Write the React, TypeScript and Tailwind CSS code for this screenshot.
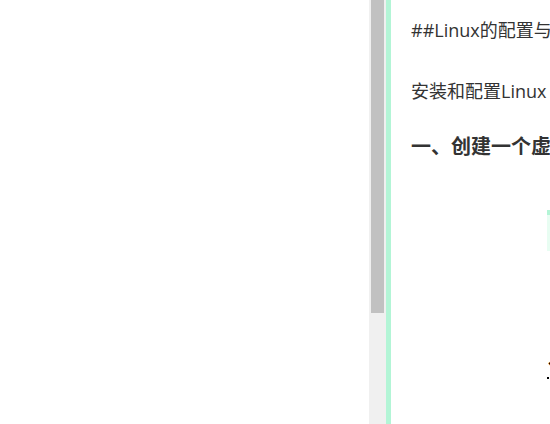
import React from "react";

const font = { fontFamily: '"Open Sans", "Noto Sans CJK SC", sans-serif' };

function Scrollbar() {
  return (
    <div className="w-[17px] h-full bg-[#f0f0f0] pl-[2px] shrink-0">
      <div className="w-[13px] h-[313px] bg-[#c1c1c1]" />
    </div>
  );
}

function Article() {
  return (
    <div
      className="flex-1 h-full overflow-hidden bg-white pl-[20px] text-[#333333] whitespace-nowrap"
      style={font}
    >
      <p className="mt-[18px] text-[18px] leading-[24px]">##Linux的配置与</p>
      <p className="mt-[37px] text-[18px] leading-[24px]">安装和配置Linux</p>
      <h2 className="mt-[29px] text-[20px] leading-[30px] font-bold">一、创建一个虚</h2>
      <div className="ml-[136px] mt-[48px] w-[8px] h-[41px] border-l-[3px] border-[#e8fdf2]">
        <div className="-ml-[3px] w-[3px] h-[5px] bg-[#b3f5d6]" />
      </div>
      <div className="ml-[136px] mt-[111px] text-[24px] leading-[10px] font-bold text-black">1</div>
      <div className="ml-[136px] mt-[5px] w-[2px] h-[2px] bg-black" />
    </div>
  );
}

export default function App() {
  return (
    <div className="flex h-[424px] w-[550px] overflow-hidden bg-white">
      <div className="w-[369px] h-full bg-white shrink-0" />
      <Scrollbar />
      <div className="w-[5px] h-full bg-[#b3f5d6] shrink-0" />
      <Article />
    </div>
  );
}
